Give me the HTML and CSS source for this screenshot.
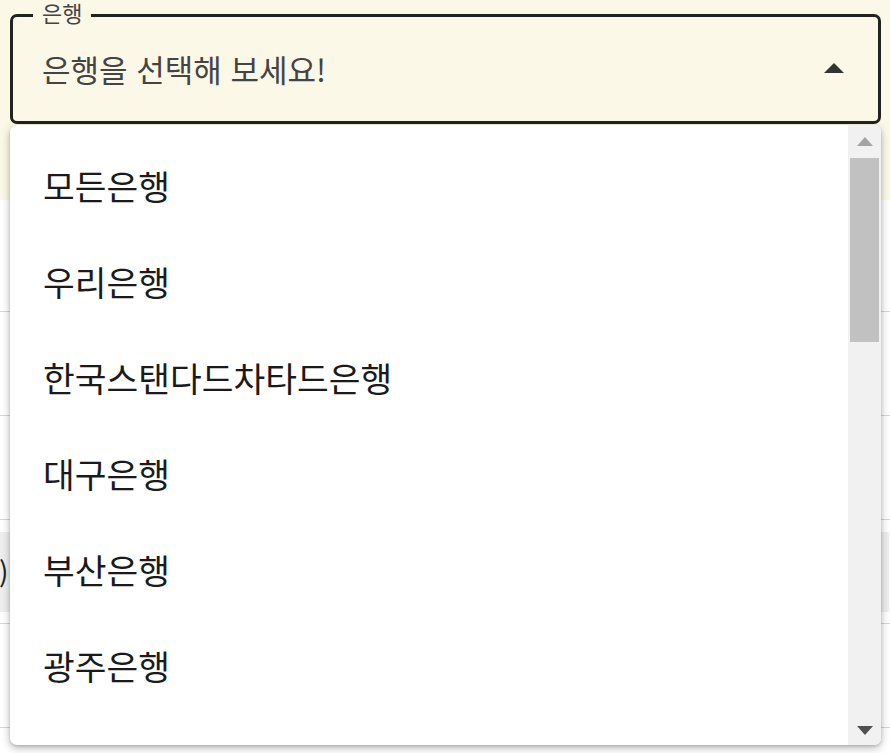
FILE: index.html
```html
<!DOCTYPE html>
<html lang="ko">
<head>
<meta charset="utf-8">
<link rel="stylesheet" href="styles.css">
</head>
<body>
<div class="page">
  <header class="top">
    <div class="select">
      <span class="select-label">은행</span>
      <span class="select-value">은행을 선택해 보세요!</span>
      <svg class="caret" width="20" height="10" viewBox="0 0 20 10"><path d="M0 10 L10 0 L20 10 Z" fill="#333"/></svg>
    </div>
  </header>
  <div class="rows">
    <div class="row first"></div>
    <div class="row"></div>
    <div class="row"></div>
    <div class="row"><div class="field">)</div></div>
    <div class="row"></div>
  </div>

  <div class="menu">
    <ul class="options">
      <li>모든은행</li>
      <li>우리은행</li>
      <li>한국스탠다드차타드은행</li>
      <li>대구은행</li>
      <li>부산은행</li>
      <li>광주은행</li>
    </ul>
    <div class="scrollbar">
      <svg class="sb-arrow" width="16" height="9" viewBox="0 0 16 9"><path d="M0 9 L8 0 L16 9 Z" fill="#a3a3a3"/></svg>
      <div class="track"><div class="thumb"></div></div>
      <svg class="sb-arrow" width="16" height="9" viewBox="0 0 16 9"><path d="M0 0 L8 9 L16 0 Z" fill="#505050"/></svg>
    </div>
  </div>
</div>
</body>
</html>
```

FILE: styles.css
```css
* { box-sizing: border-box; }
html, body { margin: 0; padding: 0; }
body {
  font-family: "Noto Sans CJK KR", "Noto Sans", sans-serif;
  background: #ffffff;
  width: 890px;
  height: 753px;
  overflow: hidden;
}
.page {
  position: relative;
  width: 890px;
  height: 753px;
}
.top {
  background: #fcf8e8;
  height: 200px;
  padding: 14px 9px 0 10px;
}
.select {
  position: relative;
  height: 110px;
  border: 3px solid #222;
  border-radius: 7px;
  display: flex;
  align-items: center;
  padding: 0 34px 0 29px;
  justify-content: space-between;
}
.select-label {
  position: absolute;
  top: -16px;
  left: 20px;
  padding: 0 9px;
  background: #fcf8e8;
  font-size: 22px;
  line-height: 23px;
  color: #444;
}
.select-value {
  font-size: 31px;
  color: #444;
  margin-top: -2px;
}
.caret { display: block; margin-top: -3px; }

.rows { display: flex; flex-direction: column; }
.row {
  height: 104px;
  border-bottom: 1px solid #d6d6d6;
  position: relative;
  display: flex;
  align-items: center;
}
.row.first { height: 112px; }
.field {
  height: 80px;
  width: 100%;
  background: #eeeeee;
  font-size: 28px;
  color: #222;
  display: flex;
  align-items: center;
  padding-left: 0;
  margin-left: -1px;
}

.menu {
  position: absolute;
  top: 125px;
  left: 10px;
  width: 871px;
  height: 620px;
  background: #fff;
  border-radius: 7px;
  box-shadow: 0 3px 8px rgba(0,0,0,0.28), 0 1px 3px rgba(0,0,0,0.15);
  overflow: hidden;
  display: flex;
}
.options {
  list-style: none;
  margin: 0;
  padding: 12px 0 0 0;
  flex: 1;
}
.options li {
  height: 96px;
  display: flex;
  align-items: center;
  padding-left: 33px;
  font-size: 34.5px;
  color: #1a1a1a;
}
.scrollbar {
  width: 33px;
  background: #f1f1f1;
  display: flex;
  flex-direction: column;
  align-items: center;
  padding: 12px 0 10px 0;
}
.sb-arrow { display: block; flex: none; }
.track {
  flex: 1;
  width: 100%;
  padding: 12px 2px 0 2px;
}
.thumb {
  height: 184px;
  background: #c1c1c1;
}
```
